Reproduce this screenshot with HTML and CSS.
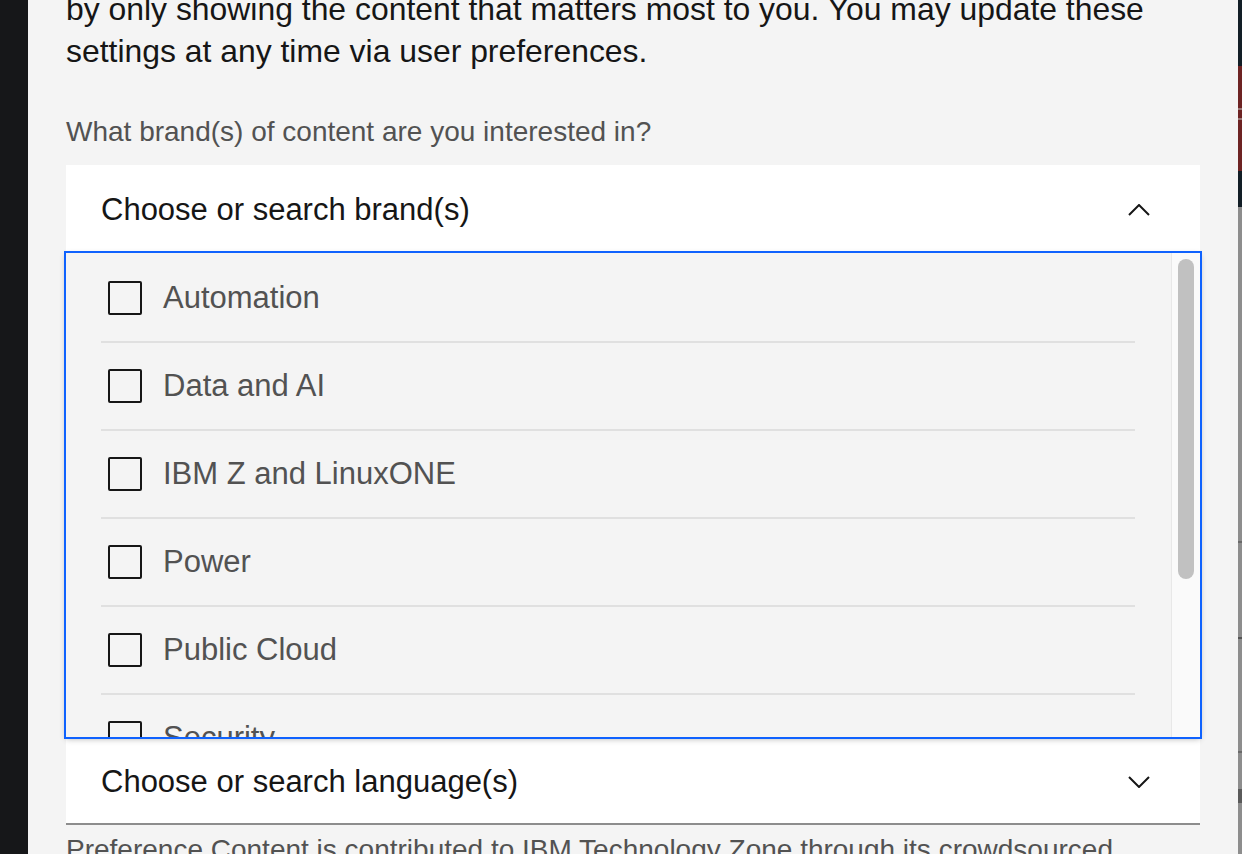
FILE: index.html
```html
<!DOCTYPE html>
<html lang="en">
<head>
<meta charset="utf-8">
<title>Preferences</title>
<link rel="stylesheet" href="styles.css">
</head>
<body>
<div class="screen">
  <div class="backdrop-left"></div>
  <main class="modal">
    <p class="intro">by only showing the content that matters most to you. You may update these settings at any time via user preferences.</p>
    <div class="field-label">What brand(s) of content are you interested in?</div>
    <div class="dropdown">
      <div class="field field-open">
        <span class="field-text">Choose or search brand(s)</span>
        <svg class="chevron" width="22" height="12" viewBox="0 0 22 12" aria-hidden="true"><path d="M1 11 L11 1 L21 11" /></svg>
      </div>
      <div class="menu">
        <ul class="options">
          <li class="option"><span class="opt-inner first"><span class="box"></span><span class="opt-text">Automation</span></span></li>
          <li class="option"><span class="opt-inner"><span class="box"></span><span class="opt-text">Data and AI</span></span></li>
          <li class="option"><span class="opt-inner"><span class="box"></span><span class="opt-text">IBM Z and LinuxONE</span></span></li>
          <li class="option"><span class="opt-inner"><span class="box"></span><span class="opt-text">Power</span></span></li>
          <li class="option"><span class="opt-inner"><span class="box"></span><span class="opt-text">Public Cloud</span></span></li>
          <li class="option"><span class="opt-inner"><span class="box"></span><span class="opt-text">Security</span></span></li>
          <li class="option"><span class="opt-inner"><span class="box"></span><span class="opt-text">Storage</span></span></li>
          <li class="option"><span class="opt-inner"><span class="box"></span><span class="opt-text">Sustainability Software</span></span></li>
        </ul>
        <div class="scrolltrack"><div class="thumb"></div></div>
      </div>
    </div>
    <div class="field field-closed">
      <span class="field-text">Choose or search language(s)</span>
      <svg class="chevron" width="22" height="12" viewBox="0 0 22 12" aria-hidden="true"><path d="M1 1 L11 11 L21 1" /></svg>
    </div>
    <p class="helper">Preference Content is contributed to IBM Technology Zone through its crowdsourced model.</p>
  </main>
  <div class="backdrop-right">
    <div class="seg seg-dark1"></div>
    <div class="seg seg-red1"></div>
    <div class="seg seg-redline"></div>
    <div class="seg seg-red2"></div>
    <div class="seg seg-redline"></div>
    <div class="seg seg-red3"></div>
    <div class="seg seg-dark2"></div>
    <div class="seg seg-gray1"></div>
    <div class="seg seg-grayline"></div>
    <div class="seg seg-gray2"></div>
    <div class="seg seg-tick"></div>
    <div class="seg seg-gray3"></div>
    <div class="seg seg-grayline"></div>
    <div class="seg seg-gray4"></div>
    <div class="seg seg-mark"></div>
    <div class="seg seg-gray5"></div>
  </div>
</div>
</body>
</html>
```

FILE: styles.css
```css
* { box-sizing: border-box; }

html, body {
  margin: 0;
  padding: 0;
  width: 1242px;
  height: 854px;
  overflow: hidden;
  background: #f4f4f4;
  font-family: "Liberation Sans", Arial, sans-serif;
}

.screen {
  display: flex;
  width: 1242px;
  height: 854px;
  overflow: hidden;
}

.backdrop-left {
  flex: 0 0 28px;
  background: #161719;
}

.modal {
  flex: 0 0 1210px;
  background: #f4f4f4;
  padding: 0 38px;
  overflow: hidden;
  display: flex;
  flex-direction: column;
}

.intro {
  margin: -12px 0 42px;
  font-size: 31.9px;
  line-height: 42px;
  color: #161616;
}

.field-label {
  font-size: 28px;
  line-height: 36px;
  color: #525252;
  margin-bottom: 15px;
}

.dropdown {
  display: flex;
  flex-direction: column;
}

.field {
  height: 86px;
  flex: 0 0 86px;
  background: #ffffff;
  display: flex;
  align-items: center;
  justify-content: space-between;
  padding: 4px 50px 0 35px;
}

.field-closed {
  border-bottom: 2px solid #8d8d8d;
  padding-top: 1px;
}

.field-text {
  font-size: 31px;
  color: #161616;
  white-space: nowrap;
}

.chevron {
  display: block;
  flex: 0 0 auto;
}

.chevron path {
  fill: none;
  stroke: #161616;
  stroke-width: 2;
}

.menu {
  position: relative;
  z-index: 1;
  margin: 2px 0;
  height: 484px;
  display: flex;
  background: #f4f4f4;
  outline: 2px solid #0f62fe;
  box-shadow: 0 2px 6px rgba(0, 0, 0, 0.3);
}

.options {
  flex: 1 1 auto;
  list-style: none;
  margin: 0;
  padding: 0;
  overflow: hidden;
}

.option {
  padding: 0 36px 0 35px;
}

.opt-inner {
  display: flex;
  align-items: center;
  height: 88px;
  border-top: 2px solid #e0e0e0;
  padding-left: 7px;
}

.opt-inner.first {
  border-top-color: transparent;
}

.box {
  flex: 0 0 34px;
  width: 34px;
  height: 34px;
  border: 2px solid #161616;
  border-radius: 2px;
  margin-right: 21px;
}

.opt-text {
  font-size: 31px;
  color: #525252;
  white-space: nowrap;
}

.scrolltrack {
  flex: 0 0 29px;
  background: #fafafa;
  border-left: 1px solid #e8e8e8;
  padding: 6px 0 0 6px;
}

.thumb {
  width: 16px;
  height: 320px;
  border-radius: 8px;
  background: #c1c1c1;
}

.helper {
  margin: 7px 0 0;
  font-size: 28px;
  line-height: 36px;
  color: #525252;
}

.backdrop-right {
  flex: 0 0 4px;
  display: flex;
  flex-direction: column;
}

.seg { flex: 0 0 auto; }
.seg-dark1 { height: 66px; background: #121e26; }
.seg-red1 { height: 42px; background: #6d2323; }
.seg-redline { height: 2px; background: #9a7676; }
.seg-red2 { height: 8px; background: #6d2323; }
.seg-red3 { height: 51px; background: #6d2323; }
.seg-dark2 { height: 36px; background: #121e26; }
.seg-gray1 { height: 334px; background: #8d8d8d; }
.seg-grayline { height: 2px; background: #6a6a6a; }
.seg-gray2 { height: 94px; background: #8d8d8d; }
.seg-tick { height: 2px; background: #555555; }
.seg-gray3 { height: 112px; background: #8d8d8d; }
.seg-gray4 { height: 36px; background: #8d8d8d; }
.seg-mark { height: 14px; background: #5a5a5a; }
.seg-gray5 { flex: 1 1 auto; background: #8d8d8d; }
```
